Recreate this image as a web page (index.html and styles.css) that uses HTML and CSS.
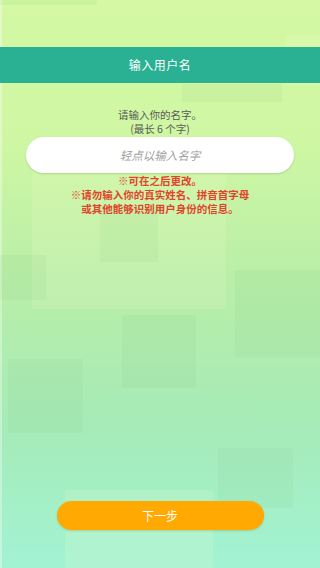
FILE: index.html
```html
<!DOCTYPE html>
<html lang="zh-CN">
<head>
<meta charset="utf-8">
<meta name="viewport" content="width=device-width, initial-scale=1">
<title>输入用户名</title>
<link rel="stylesheet" href="styles.css">
</head>
<body>
<div class="screen">
  <div class="deco">
    <span class="sq sq-light sq1"></span>
    <span class="sq sq-dark sq2"></span>
    <span class="sq sq-dark sq3"></span>
    <span class="sq sq-dark sq4"></span>
    <span class="sq sq-dark sq5"></span>
    <span class="sq sq-dark sq6"></span>
    <span class="sq sq-dark sq7"></span>
    <span class="sq sq-light sq8"></span>
    <span class="sq sq-light sq9"></span>
    <span class="sq sq-dark sq10"></span>
    <span class="sq sq-dark sq11"></span>
  </div>
  <header class="titlebar">输入用户名</header>
  <main class="content">
    <p class="prompt"><span class="line">请输入你的名字。</span><span class="line">(最长 6 个字)</span></p>
    <div class="field"><span class="placeholder">轻点以输入名字</span></div>
    <p class="notes"><span class="line">※可在之后更改。</span><span class="line">※请勿输入你的真实姓名、拼音首字母</span><span class="line">或其他能够识别用户身份的信息。</span></p>
  </main>
  <footer class="actions">
    <button class="next" type="button">下一步</button>
  </footer>
</div>
</body>
</html>
```

FILE: styles.css
```css
html, body {
  margin: 0;
  padding: 0;
}
body {
  font-family: "Noto Sans CJK SC", "Noto Sans", sans-serif;
}
.screen {
  position: relative;
  width: 320px;
  height: 568px;
  overflow: hidden;
  display: flex;
  flex-direction: column;
  background: linear-gradient(180deg, #d4f8a3 0%, #cff7a3 25%, #b8eea8 50%, #a6ebb8 75%, #a2f3d3 100%);
  box-shadow: inset 2px 0 0 rgba(255,255,255,0.35);
}
.deco {
  position: absolute;
  inset: 0;
  pointer-events: none;
}
.sq {
  position: absolute;
  display: block;
}
.sq-dark { background: rgba(120, 190, 120, 0.09); }
.sq-light { background: rgba(255, 255, 210, 0.14); }
.sq1 { left: 32px; top: 140px; width: 194px; height: 169px; }
.sq2 { left: 100px; top: 205px; width: 58px; height: 57px; }
.sq3 { left: 0; top: 255px; width: 46px; height: 45px; }
.sq4 { left: 235px; top: 270px; width: 85px; height: 88px; }
.sq5 { left: 122px; top: 315px; width: 74px; height: 73px; }
.sq6 { left: 8px; top: 359px; width: 75px; height: 74px; }
.sq7 { left: 218px; top: 448px; width: 75px; height: 60px; }
.sq8 { left: 65px; top: 490px; width: 148px; height: 78px; }
.sq9 { left: 286px; top: 35px; width: 34px; height: 50px; }
.sq10 { left: 182px; top: 84px; width: 100px; height: 18px; }
.sq11 { left: 0; top: 0; width: 97px; height: 5px; }
.titlebar {
  position: relative;
  margin-top: 47px;
  height: 36px;
  background: #2ab193;
  color: #ffffff;
  font-size: 12px;
  line-height: 36px;
  text-align: center;
  letter-spacing: 0.5px;
}
.content {
  position: relative;
  display: flex;
  flex-direction: column;
  align-items: center;
  padding-top: 25px;
}
.line {
  display: block;
  height: 14px;
  line-height: 14px;
}
.prompt {
  margin: 0;
  font-size: 10.5px;
  color: #5a5a5a;
  text-align: center;
}
.field {
  margin-top: 1px;
  width: 268px;
  height: 36px;
  border-radius: 18px;
  background: #ffffff;
  box-shadow: 0 1px 2px rgba(80, 120, 60, 0.25);
  display: flex;
  align-items: center;
  justify-content: center;
}
.placeholder {
  font-size: 11.5px;
  color: #a0a0a0;
  font-style: italic;
}
.notes {
  margin: 1px 0 0;
  font-size: 10.5px;
  font-weight: 700;
  color: #e2442b;
  text-align: center;
}
.actions {
  position: relative;
  margin-top: auto;
  padding-bottom: 38px;
  display: flex;
  justify-content: center;
}
.next {
  width: 207px;
  height: 29px;
  border: 0;
  border-radius: 15px;
  background: #ffa902;
  color: #ffffff;
  font-family: inherit;
  font-size: 12px;
  box-shadow: 0 1px 2px rgba(120, 120, 40, 0.25);
  padding: 0;
}
```
